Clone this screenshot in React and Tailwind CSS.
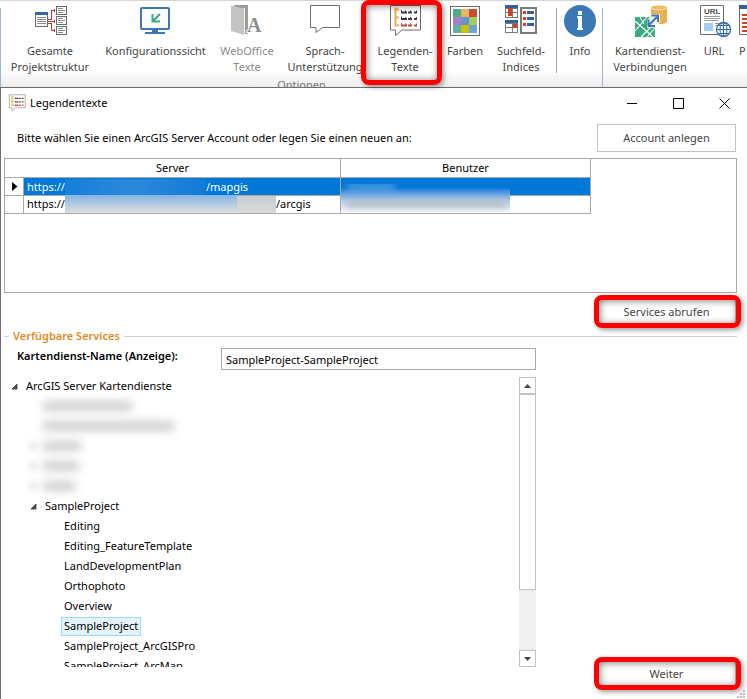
import React, { useState } from 'react';

function StructureIcon() {
  return (
    <svg width="34" height="34" viewBox="0 0 34 34" fill="none" shapeRendering="crispEdges">
      <path d="M2.5 8.5h12v14h-12z" fill="#fff" stroke="#6a6a6a" />
      <path d="M2 8h13v3H2z" fill="#3465a4" />
      <path d="M4 13.5h9M4 15.5h9M4 17.5h9M4 19.5h9" stroke="#8a8a8a" />
      <path d="M15 15.5h3.5v-9H22M15 17.5h7M15 19.5h3.5v7H22" stroke="#c0392b" />
      <path d="M21.5 5v3M21.5 16v3M21.5 25v3" stroke="#c0392b" />
      {[2, 12, 22].map((y) => (
        <g key={y}>
          <path d={`M23.5 ${y + 0.5}h10v8h-10z`} fill="#fff" stroke="#6a6a6a" />
          <path d={`M25 ${y + 2.5}h5M25 ${y + 4.5}h7M25 ${y + 6.5}h5`} stroke="#8a8a8a" />
        </g>
      ))}
    </svg>
  );
}

function MonitorIcon() {
  return (
    <svg width="34" height="34" viewBox="0 0 34 34" fill="none">
      <rect x="2" y="4" width="28" height="21" rx="1" stroke="#3c78b4" strokeWidth="2" />
      <path d="M13 25h6v3h-6zM6 28h20v2H6z" fill="#3c78b4" />
      <path d="M21 10l-7 7M13.500 10v7.500H21" stroke="#3aaa7f" strokeWidth="2" />
    </svg>
  );
}

function TextsIcon() {
  return (
    <svg width="34" height="34" viewBox="0 0 34 34">
      <path d="M4 1h14v29h-4z" fill="#9b9b9b" />
      <path d="M1 1.500l13.500 3v26.500L1 27z" fill="#c3c3c3" />
      <path d="M14.500 4v27.500" stroke="#f1f1f1" />
      <text x="17" y="28" fontSize="20" fontWeight="bold" fontFamily="Liberation Serif, serif" fill="#8e8e8e" stroke="#fff" strokeWidth="2" paintOrder="stroke">A</text>
    </svg>
  );
}

function SpeechIcon() {
  return (
    <svg width="34" height="34" viewBox="0 0 34 34">
      <path d="M2.500 1.500h29v22H14.500l-6.500 5v-5H2.500z" fill="#fff" stroke="#6b6b6b" />
    </svg>
  );
}

function LegendIcon({ size = 34 }) {
  return (
    <svg width={size} height={size} viewBox="0 0 34 34" fill="none">
      <path d="M2.500 1.500h30v24.500H14l-6.500 5.500V26h-5z" fill="#fff" stroke="#6b6b6b" />
      <path d="M7.500 3.500v19M7 5.500h4M7 13.500h4M7 21.500h4" stroke="#e8b04f" strokeWidth="2" />
      {[['#3c3c3c', 8.5], ['#3c3c3c', 15], ['#c94a35', 21.5]].map(([color, y]) => (
        <g key={y} stroke={color}>
          <path d={`M13 ${y}h6m1 0h4m2 0h3`} strokeWidth="2" />
          <path d={`M13.500 ${y - 2.5}v3M17.500 ${y - 2}v2M22.500 ${y - 2}v2M28.500 ${y - 2}v2`} />
        </g>
      ))}
    </svg>
  );
}

const swatches = ['#4bad89', '#e8b566', '#ca4a35', '#a97fc4', '#6692cf', '#a0cc63', '#63b0a5', '#c9c400', '#6fa3d6'];

function ColorsIcon() {
  return (
    <svg width="34" height="34" viewBox="0 0 34 34">
      <rect x="2.500" y="2.500" width="29" height="29" fill="#fff" stroke="#6b6b6b" />
      {swatches.map((color, i) => (
        <rect key={color} x={5 + (i % 3) * 8} y={5 + Math.floor(i / 3) * 8} width="8" height="8" fill={color} />
      ))}
    </svg>
  );
}

function IndexIcon() {
  return (
    <svg width="34" height="34" viewBox="0 0 34 34" shapeRendering="crispEdges">
      {[1, 16].map((y) => (
        <g key={y}>
          <rect x="1" y={y} width="13" height="13" fill="#7a7a7a" />
          <rect x="1" y={y} width="13" height="3" fill="#34619b" />
          <path d={`M2 ${y + 4}h6v3H2zM2 ${y + 8}h6v4H2zM9 ${y + 4}h4v3H9zM9 ${y + 8}h4v4H9z`} fill="#fff" />
        </g>
      ))}
      <path d="M4 4h4v8H4zM9 20h4v4H9z" fill="#d0401f" />
      <rect x="17" y="4" width="15" height="25" fill="#fff" stroke="#7a7a7a" strokeWidth="2" />
      <path d="M19 7h3v3h-3zM19 13h3v3h-3zM19 19h3v3h-3z" fill="#d0401f" />
      <path d="M23 7h7v3h-7zM23 13h7v3h-7zM23 19h7v3h-7z" fill="#34619b" />
    </svg>
  );
}

function InfoIcon() {
  return (
    <svg width="34" height="34" viewBox="0 0 34 34">
      <circle cx="17" cy="17" r="16" fill="#3c78b4" />
      <path d="M15 7h4v4h-4zM14 12h5v12h1v2h-6v-2h1V14h-1z" fill="#fff" />
    </svg>
  );
}

function MapServiceIcon() {
  return (
    <svg width="34" height="34" viewBox="0 0 34 34" fill="none">
      <path d="M18 3.500v14c0 3.500 16 3.500 16 0v-14z" fill="#e8b04f" />
      <ellipse cx="26" cy="3.500" rx="8" ry="2.500" fill="#f0bc62" stroke="#fff" strokeWidth=".6" />
      <path d="M2 13h20v20H2z" fill="#3aaa7f" />
      <path d="M2 17l18 16M2 27l12-14M8 33l12-12M14 33l8-9M7 13l4 7" stroke="#fff" strokeWidth="1.100" />
      <path d="M19 10h8v8l-6 6h-7v-8z" fill="#fff" opacity=".85" />
      <path d="M16 21l8-8M18.500 11.500h6.500v6.500M15.500 15.500v6.500h6.500" stroke="#3c78b4" strokeWidth="2" />
    </svg>
  );
}

function UrlIcon() {
  return (
    <svg width="34" height="34" viewBox="0 0 34 34" fill="none">
      <path d="M3.500 1.500h23v29h-23z" fill="#fff" stroke="#6b6b6b" />
      <text x="7" y="10" fontSize="8" fontWeight="bold" fontFamily="Liberation Sans, sans-serif" fill="#555">URL</text>
      <path d="M7 12.500h16M7 14.500h16M7 16.500h14M18 19.500h5M18 21.500h3" stroke="#9a9a9a" />
      <path d="M7 19h9v8H7z" fill="#9fd0f3" />
      <circle cx="26.500" cy="25.500" r="7" fill="#fff" stroke="#2f6aa8" strokeWidth="1.300" />
      <ellipse cx="26.500" cy="25.500" rx="3.500" ry="7" stroke="#2f6aa8" />
      <path d="M26.500 18.500v14M19.500 25.500h14M21 21.500h11M21 29.500h11" stroke="#2f6aa8" />
    </svg>
  );
}

function ReportIcon() {
  return (
    <svg width="34" height="34" viewBox="0 0 34 34" fill="none">
      <path d="M.5 1.500h24v29H.5z" fill="#fff" stroke="#6b6b6b" />
      <path d="M0 1h25v4H0z" fill="#34619b" />
      <path d="M3 11h19M3 15h19M3 19h19M3 23h19M3 27h19" stroke="#d0401f" strokeWidth="2" />
    </svg>
  );
}

function Highlight({ className }) {
  return (
    <span
      className={`pointer-events-none absolute rounded-lg border-[5px] border-[#fe0000] shadow-[inset_1px_1px_7px_rgba(0,0,0,0.5),2px_2px_5px_rgba(0,0,0,0.4)] ${className}`}
    />
  );
}

function RibbonItem({ icon, lines, width, muted, highlighted }) {
  return (
    <button
      type="button"
      className={`relative flex shrink-0 flex-col items-center whitespace-nowrap pt-1 leading-4 ${width} ${muted ? 'text-[#8a8a8a]' : 'text-[#444]'}`}
    >
      {icon}
      <span className="mt-[5px]">
        {lines.map((line) => (
          <span key={line} className="block">{line}</span>
        ))}
      </span>
      {highlighted && <Highlight className="-left-2 -right-px top-0 z-20 h-[85px]" />}
    </button>
  );
}

function Ribbon() {
  return (
    <header className="flex h-[87px] border-t border-[#d5d5d5] bg-linear-to-b from-white from-80% to-[#ececec] text-[11px]">
      <div className="mt-[7px] w-px shrink-0 bg-[#9fb3d3]" />
      <div className="-mt-px flex h-[87px] w-[601px] shrink-0 flex-col">
        <div className="flex h-[77px] pl-px">
          <RibbonItem icon={<StructureIcon />} lines={['Gesamte', 'Projektstruktur']} width="w-24" />
          <RibbonItem icon={<MonitorIcon />} lines={['Konfigurationssicht']} width="w-[115px]" />
          <RibbonItem icon={<TextsIcon />} lines={['WebOffice', 'Texte']} width="w-[68px]" muted />
          <RibbonItem icon={<SpeechIcon />} lines={['Sprach-', 'Unterstützung']} width="w-[88px]" />
          <RibbonItem icon={<LegendIcon />} lines={['Legenden-', 'Texte']} width="w-[72px]" highlighted />
          <RibbonItem icon={<ColorsIcon />} lines={['Farben']} width="w-12" />
          <RibbonItem icon={<IndexIcon />} lines={['Suchfeld-', 'Indices']} width="w-16" />
          <div className="mx-[3px] mt-2 h-[65px] w-px bg-[#a8a8a8]" />
          <RibbonItem icon={<InfoIcon />} lines={['Info']} width="w-10" />
        </div>
        <div className="h-[10px] overflow-hidden text-center leading-4 text-[#777]">Optionen</div>
      </div>
      <div className="mt-[7px] w-px shrink-0 bg-[#9fb3d3]" />
      <div className="-mt-px flex min-w-0 flex-1 items-start overflow-hidden pl-0.5">
        <RibbonItem icon={<MapServiceIcon />} lines={['Kartendienst-', 'Verbindungen']} width="w-[90px]" />
        <RibbonItem icon={<UrlIcon />} lines={['URL']} width="w-[38px]" />
        <div className="ml-1.5 shrink-0">
          <RibbonItem icon={<ReportIcon />} lines={['P']} width="w-[34px] items-start" />
        </div>
      </div>
    </header>
  );
}

function WindowButton({ label, path }) {
  return (
    <button type="button" aria-label={label} className="flex w-[46px] justify-center">
      <svg width="11" height="11" viewBox="0 0 11 11" fill="none" stroke="#000"><path d={path} /></svg>
    </button>
  );
}

function TitleBar() {
  return (
    <div className="flex h-[30px] items-center pl-[7px]">
      <LegendIcon size={18} />
      <h1 className="ml-1 text-[11px] text-black">Legendentexte</h1>
      <div className="ml-auto flex">
        <WindowButton label="Minimieren" path="M0 5.500h10" />
        <WindowButton label="Maximieren" path="M.5 .5h10v10H.5z" />
        <WindowButton label="Schließen" path="M.5 .5l10 10M10.500 .5l-10 10" />
      </div>
    </div>
  );
}

function ActionButton({ children, highlighted }) {
  return (
    <button type="button" className="relative h-7 w-[139px] shrink-0 border border-[#c3c3c3] bg-white text-[11px] text-[#444]">
      {children}
      {highlighted && <Highlight className="-left-1 -right-1.5 -bottom-[3px] -top-1" />}
    </button>
  );
}

function AccountTable() {
  const cell = 'border-b border-r border-[#a9a9a9] p-0 font-normal';
  return (
    <div className="relative h-[135px] border border-[#a9a9a9]">
      <table className="w-[586px] table-fixed border-separate border-spacing-0 text-[11px] leading-4 text-black">
        <colgroup>
          <col className="w-[19px]" />
          <col className="w-[317px]" />
          <col className="w-[250px]" />
        </colgroup>
        <thead>
          <tr className="h-[19px]">
            <th colSpan={2} className={`${cell} leading-[18px]`}>Server</th>
            <th className={`${cell} leading-[18px]`}>Benutzer</th>
          </tr>
        </thead>
        <tbody>
          <tr className="h-[18px]">
            <td className={cell}>
              <svg className="ml-[7px]" width="6" height="9" viewBox="0 0 6 9"><path d="M0 0l5.500 4.500L0 9z" /></svg>
            </td>
            <td className={`${cell} bg-[#0078d7]`}>
              <div className="flex pl-[3px] text-white">
                <span>https://</span>
                <span className="h-4 w-[141px] bg-linear-to-r from-[#1580da] via-[#2b88dc] to-[#0f7bd8]" />
                <span>/mapgis</span>
              </div>
            </td>
            <td className={`${cell} bg-[#0078d7]`} />
          </tr>
          <tr className="h-[18px]">
            <td className={cell} />
            <td className={cell}>
              <div className="flex pl-[3px]">
                <span>https://</span>
                <span className="-mt-px h-[18px] w-[172px] bg-linear-to-b from-[#84b5e2] to-[#dedede]" />
                <span className="h-[17px] w-[39px] bg-linear-to-b from-[#c8ccd0] to-[#dadada]" />
                <span>/arcgis</span>
              </div>
            </td>
            <td className={cell} />
          </tr>
        </tbody>
      </table>
      {/* redacted user names */}
      <div className="absolute left-[336px] top-[25px] h-[28px] w-[169px] overflow-hidden bg-linear-to-b from-[#0078d7] from-15% via-[#b4cfe8] via-60% to-[#f6f6f6]">
        <div className="ml-1.5 h-1.5 w-12 bg-[#8cc0ee] opacity-60 blur-[3px]" />
        <div className="ml-1.5 mt-2.5 h-2 w-40 bg-[#a9adb3] opacity-60 blur-[3px]" />
      </div>
    </div>
  );
}

function Expander() {
  return (
    <svg width="7" height="7" viewBox="0 0 7 7" className="shrink-0"><path d="M6 1v5H1z" fill="#555" stroke="#333" strokeWidth=".8" /></svg>
  );
}

const redacted = ['w-[89px]', 'w-[131px]', 'w-[38px]', 'w-9', 'w-8'];
const services = [
  'Editing',
  'Editing_FeatureTemplate',
  'LandDevelopmentPlan',
  'Orthophoto',
  'Overview',
  'SampleProject',
  'SampleProject_ArcGISPro',
  'SampleProject_ArcMap',
];

function ServiceTree({ selected, onSelect }) {
  return (
    <div className="flex h-[291px] w-[532px] shrink-0 text-[11px] text-black">
      <div className="min-w-0 flex-1 overflow-hidden">
        <div className="flex h-5 items-center gap-2 pl-[7px]">
          <Expander />
          <span>ArcGIS Server Kartendienste</span>
        </div>
        {redacted.map((width, i) => (
          <div key={width} className="flex h-5 items-center pl-[27px]">
            <span className={`mr-2 h-2 w-1 blur-[3px] ${i > 1 ? 'bg-gray-300' : ''}`} />
            <span className={`h-2 bg-[#c4c4c4] blur-[5px] ${width}`} />
          </div>
        ))}
        <div className="flex h-5 items-center gap-2 pl-[26px]">
          <Expander />
          <span>SampleProject</span>
        </div>
        {services.map((name) => (
          <div key={name} className="flex h-5 items-center pl-[57px]">
            <button
              type="button"
              onClick={() => onSelect(name)}
              className={`h-[19px] border px-0.5 ${name === selected ? 'border-[#99dcfb] bg-[#e5f3fb]' : 'border-transparent'}`}
            >
              {name}
            </button>
          </div>
        ))}
      </div>
      <div className="mt-px flex w-[17px] flex-col bg-[#f0f0f0]">
        <button type="button" aria-label="Nach oben" className="flex h-[17px] items-center justify-center border border-[#c3c3c3] bg-white">
          <svg width="7" height="4" viewBox="0 0 7 4"><path d="M0 4L3.500 0 7 4z" fill="#444" /></svg>
        </button>
        <div className="h-[196px] border border-[#c3c3c3] bg-white" />
        <button type="button" aria-label="Nach unten" className="mt-auto flex h-[17px] items-center justify-center border border-[#c3c3c3] bg-white">
          <svg width="7" height="4" viewBox="0 0 7 4"><path d="M0 0l3.500 4L7 0z" fill="#444" /></svg>
        </button>
      </div>
    </div>
  );
}

function ResizeGrip() {
  return (
    <svg className="absolute bottom-px right-0.5" width="8" height="8" viewBox="0 0 8 8" fill="#bdbdbd">
      <path d="M6 0h2v2H6zM3 3h2v2H3zM6 3h2v2H6zM0 6h2v2H0zM3 6h2v2H3zM6 6h2v2H6z" />
    </svg>
  );
}

export default function App() {
  const [service, setService] = useState('SampleProject');
  const [name, setName] = useState('SampleProject-SampleProject');

  return (
    <div className="overflow-hidden bg-white font-['Noto_Sans',sans-serif]">
      <Ribbon />
      <main className="relative border-l border-t border-[#6e6e6e] bg-white pb-[11px]">
        <TitleBar />
        <div className="pl-[3px] pr-2.5">
          <div className="flex items-center justify-between pb-1.5 pl-[13px] pr-px pt-1.5">
            <p className="text-[11px] text-black">Bitte wählen Sie einen ArcGIS Server Account oder legen Sie einen neuen an:</p>
            <ActionButton>Account anlegen</ActionButton>
          </div>
          <AccountTable />
          <div className="flex justify-end pr-px pt-[5px]">
            <ActionButton highlighted>Services abrufen</ActionButton>
          </div>
          <div className="mt-0.5 flex items-center gap-1 text-[11px] font-semibold leading-4 text-[#e08a1e]">
            <span className="h-px w-[5px] bg-[#d0d0d0]" />
            <h2>Verfügbare Services</h2>
            <span className="h-px flex-1 bg-[#d0d0d0]" />
          </div>
          <div className="flex items-start pl-[13px] pt-1">
            <label htmlFor="service-name" className="w-[204px] shrink-0 text-[11px] font-semibold leading-4 text-black">
              Kartendienst-Name (Anzeige):
            </label>
            <input
              id="service-name"
              value={name}
              onChange={(e) => setName(e.target.value)}
              className="h-[22px] w-[315px] border border-[#a9a9a9] bg-white px-1 text-[11px] text-black outline-none"
            />
          </div>
          <div className="flex items-end justify-between pr-px pt-1.5">
            <div className="pb-[21px]">
              <ServiceTree selected={service} onSelect={setService} />
            </div>
            <ActionButton highlighted>Weiter</ActionButton>
          </div>
        </div>
        <ResizeGrip />
      </main>
    </div>
  );
}
